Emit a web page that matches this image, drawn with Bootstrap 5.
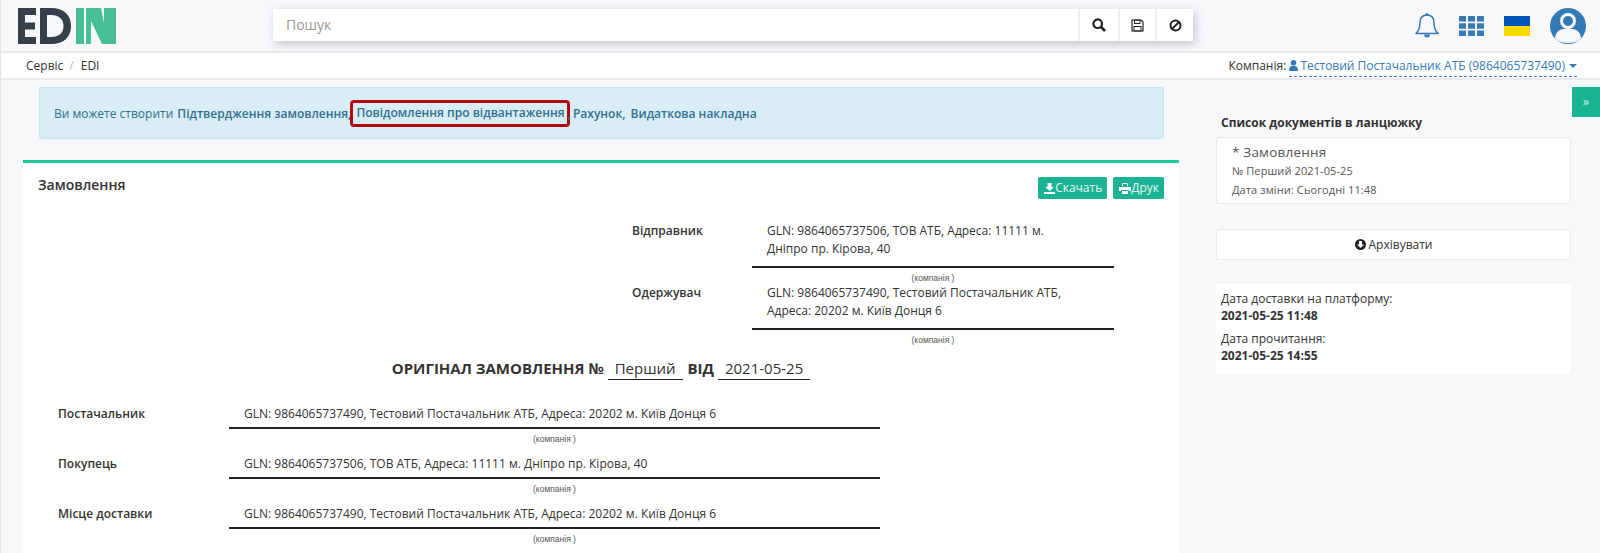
<!DOCTYPE html>
<html lang="uk">
<head>
  <meta charset="UTF-8" />
  <meta name="viewport" content="width=device-width, initial-scale=1" />
  <title>EDIN</title>
  <link href="https://cdn.jsdelivr.net/npm/bootstrap@5.3.0/dist/css/bootstrap.min.css" rel="stylesheet" />
  <style>
    html, body { height: 553px; overflow: hidden; }
    body {
      font-family: "Open Sans", "Noto Sans", sans-serif;
      font-size: 12px;
      line-height: 18px;
      color: #333;
      background: #f8f8fb;
      border-left: 1px solid #e2e2e2;
    }
    .top-bar { height: 53px; border-bottom: 2px solid #eaeaee; }
    .edin-logo { margin-left: 17px; margin-top: -1px; width: 100px; height: 37px; }
    .search-box {
      position: absolute; left: 272px; top: 9px;
      width: 920px; height: 32px;
      background: #fff;
      box-shadow: 2px 3px 10px rgba(90, 90, 120, .35);
    }
    .search-box .search-text { padding-left: 13px; font-size: 14px; color: #999; line-height: 32px; }
    .search-btn { height: 32px; border-left: 2px solid #eee; display: flex; align-items: center; justify-content: center; }
    .top-icons { margin-left: auto; padding-right: 14px; gap: 20px; }
    .crumb-bar { height: 27px; background: #fff; border-bottom: 2px solid #eaeaee; padding-left: 25px; padding-right: 23px; line-height: 25px; }
    .crumb-bar .sep { color: #bbb; margin: 0 7px 0 6px; }
    .company-link { color: #337ab7; border-bottom: 1px dashed #337ab7; line-height: 18px; margin-left: 3px; margin-top: 4px; height: 20px; }
    .company-link svg { margin-right: -1px; vertical-align: -1px; }
    .caret-down { display: inline-block; border: 4px solid transparent; border-top-color: #337ab7; border-bottom: 0; margin-left: 4px; vertical-align: 2px; }
    .main-area { position: relative; padding-left: 22px; }
    .left-col { width: 1156px; }
    .info-alert {
      margin: 7px 15px 21px 16px; height: 52px;
      background: #d9edf7; border: 1px solid #bce8f1; border-radius: 3px; color: #31708f;
      padding: 2px 0 0 14px; display: flex; align-items: center;
    }
    .info-alert b { font-weight: 600; }
    .info-alert .lead-text { margin-right: 4px; }
    .red-box { outline: 3px solid #b30a10; border-radius: 1px; padding: 1px 2px 2px 3px; margin: -1px 1px 0 2px; }
    .doc-panel { background: #fff; border-top: 3px solid #1cc7a0; height: 400px; padding: 14px 15px 0 15px; }
    .doc-title { font-size: 14px; font-weight: 600; margin-top: -1px; }
    .btn-pair { gap: 6px; }
    .teal-btn {
      background: #1ab394; color: #e9f8f5; border: 0; border-radius: 2px; height: 22px; font-size: 12px;
      padding: 0 5px 0 6px; line-height: 22px; display: inline-flex; align-items: center;
    }
    .party-block { margin-left: 594px; margin-top: 23px; }
    .party-row { display: flex; }
    .party-label { width: 120px; font-weight: 600; }
    .party-val { width: 362px; }
    .party-val .val-text { padding: 0 40px 8px 15px; border-bottom: 2px solid #222; line-height: 18px; }
    .caption-small { font-family: "Liberation Sans", sans-serif; font-size: 8.500px; line-height: 10px; text-align: center; color: #555; margin-top: 5px; height: 11px; }
    .doc-heading { text-align: center; font-size: 15px; font-weight: 700; margin-top: 11px; padding-left: 2px; line-height: 22px; }
    .fill-in { display: inline-block; font-weight: 400; border-bottom: 1px solid #222; padding: 0 7px; margin: 0 2px 0 0; font-size: 15px; }
    .fill-in.first-fill { margin-right: 1px; }
    .bottom-rows { margin-top: 25px; margin-left: 20px; }
    .bottom-row { display: flex; height: 50px; }
    .bottom-row .party-label { width: 171px; }
    .bottom-row .party-val { width: 651px; }
    .bottom-row .val-text { padding: 0 0 4px 15px; }
    .right-col { width: 355px; margin-left: 37px; padding-top: 34px; }
    .chain-title { font-size: 12px; font-weight: 700; padding-left: 5px; line-height: 18px; margin-bottom: 5px; }
    .chain-card { background: #fff; border: 1px solid #eaeaee; border-radius: 3px; height: 67px; padding: 5px 15px; font-size: 11px; font-weight: 500; line-height: 19px; letter-spacing: .1px; color: #555; }
    .chain-card .chain-name { font-size: 13.500px; letter-spacing: .2px; line-height: 18px; font-weight: 500; }
    .archive-btn { background: #fff; border: 1px solid #eaeaee; border-radius: 2px; height: 31px; margin-top: 25px; display: flex; align-items: center; justify-content: center; gap: 3px; }
    .dates-box { background: #fff; height: 90px; margin-top: 24px; padding: 6px 5px; line-height: 17px; }
    .dates-box b { display: block; margin-bottom: 6px; }
    .toggle-btn { position: absolute; right: 0; top: 7px; width: 28px; height: 30px; background: #1ab394; color: #d5f3ec; font-size: 13px; line-height: 28px; text-align: center; }
  </style>
</head>
<body>

<header class="top-bar d-flex align-items-center position-relative">
  <svg class="edin-logo" viewBox="0 0 100 37" aria-label="EDIN">
    <rect x="0" y="1" width="7" height="36" fill="#363f4a"/>
    <rect x="0" y="1" width="18" height="7" fill="#363f4a"/>
    <rect x="0" y="15.500" width="17" height="7" fill="#363f4a"/>
    <rect x="0" y="30" width="18" height="7" fill="#363f4a"/>
    <path fill="#363f4a" fill-rule="evenodd" d="M22 1h11c13 0 20 7 20 18s-7 18-20 18H22zM29 8v22h4c8 0 12.500-4 12.500-11S41 8 33 8z"/>
    <rect x="58" y="1" width="8" height="36" fill="#47c09a"/>
    <path fill="#47c09a" d="M68 1h30v36H68z"/>
    <path fill="#f8f8fb" d="M73 14v23h11z"/>
    <path fill="#f8f8fb" d="M83 1h3v15z"/>
  </svg>

  <div class="search-box d-flex">
    <div class="search-text flex-grow-1">Пошук</div>
    <div class="search-btn" style="width:40px">
      <svg width="14" height="14" viewBox="0 0 14 14"><circle cx="5.700" cy="5.700" r="4.300" fill="none" stroke="#222" stroke-width="2.200"/><path d="M9 9l4 4" stroke="#222" stroke-width="2.600"/></svg>
    </div>
    <div class="search-btn" style="width:37px">
      <svg width="13" height="13" viewBox="0 0 13 13"><path d="M1 1h9l2 2v9H1z" fill="none" stroke="#222" stroke-width="1.200"/><rect x="3.500" y="1" width="5.500" height="3.500" fill="none" stroke="#222"/><rect x="3" y="7.500" width="7" height="4.500" fill="none" stroke="#222"/></svg>
    </div>
    <div class="search-btn" style="width:38px">
      <svg width="13" height="13" viewBox="0 0 13 13"><circle cx="6.500" cy="6.500" r="5" fill="none" stroke="#222" stroke-width="2"/><path d="M3 10l7-7" stroke="#222" stroke-width="2"/></svg>
    </div>
  </div>

  <div class="top-icons d-flex align-items-center">
    <svg width="24" height="27" viewBox="0 0 24 27"><path d="M12 3c-5 0-7 3.500-7 8 0 5-1.500 8-4 10.500h22C20.500 19 19 16 19 11c0-4.500-2-8-7-8z" fill="none" stroke="#337ab7" stroke-width="1.500" stroke-linejoin="round"/><circle cx="12" cy="2.500" r="1.500" fill="#337ab7"/><path d="M9 22.500a3 3 0 0 0 6 0z" fill="#337ab7"/></svg>
    <svg width="25" height="20" viewBox="0 0 25 20"><g fill="#337ab7"><rect width="7" height="5.500" rx=".5"/><rect x="9" width="7" height="5.500" rx=".5"/><rect x="18" width="7" height="5.500" rx=".5"/><rect y="7.300" width="7" height="5.500" rx=".5"/><rect x="9" y="7.300" width="7" height="5.500" rx=".5"/><rect x="18" y="7.300" width="7" height="5.500" rx=".5"/><rect y="14.500" width="7" height="5.500" rx=".5"/><rect x="9" y="14.500" width="7" height="5.500" rx=".5"/><rect x="18" y="14.500" width="7" height="5.500" rx=".5"/></g></svg>
    <svg width="26" height="20" viewBox="0 0 26 20"><rect width="26" height="10" fill="#0057b8"/><rect y="10" width="26" height="10" fill="#ffd700"/></svg>
    <svg width="36" height="36" viewBox="0 0 36 36"><defs><clipPath id="avatarClip"><circle cx="18" cy="18" r="18"/></clipPath></defs><circle cx="18" cy="18" r="18" fill="#337ab7"/><circle cx="18" cy="13" r="6.500" fill="none" stroke="#f8f8fb" stroke-width="3"/><path clip-path="url(#avatarClip)" d="M5 31c0-6 4-10 9-10h8c5 0 9 4 9 10-3 2.500-8 4-13 4s-10-1.500-13-4z" fill="#f8f8fb"/></svg>
  </div>
</header>

<div class="crumb-bar d-flex justify-content-between">
  <div>Сервіс<span class="sep">/</span>EDI</div>
  <div class="d-flex">
    <span>Компанія:</span>
    <span class="company-link">
      <svg width="9" height="11" viewBox="0 0 9 11"><circle cx="4.500" cy="2.800" r="2.800" fill="#337ab7"/><path d="M0 11c0-3 1-5 3-5h3c2 0 3 2 3 5z" fill="#337ab7"/></svg>
      Тестовий Постачальник АТБ (9864065737490)<span class="caret-down"></span>
    </span>
  </div>
</div>

<div class="main-area d-flex">
  <div class="left-col">
    <div class="info-alert">
      <span class="lead-text">Ви можете створити</span>
      <b>Підтвердження замовлення,</b>
      <b class="red-box">Повідомлення про відвантаження</b>
      <b>,&thinsp;Рахунок,&thinsp; Видаткова накладна</b>
    </div>

    <div class="doc-panel">
      <div class="d-flex justify-content-between">
        <div class="doc-title">Замовлення</div>
        <div class="btn-pair d-flex">
          <button class="teal-btn" type="button">
            <svg width="11" height="11" viewBox="0 0 11 11"><path d="M3.500 0h4v4h2.500L5.500 8 1 4h2.500zM0 9h11v2H0z" fill="#fff"/></svg>Скачать
          </button>
          <button class="teal-btn" type="button">
            <svg width="12" height="11" viewBox="0 0 12 11"><path d="M3 3V1.500A1.500 1.500 0 0 1 4.500 0h3A1.500 1.500 0 0 1 9 1.500V3H8V1H4v2zM0 4h12v4h-2V7H2v1H0zM3 8h6v3H3z" fill="#fff"/></svg>Друк
          </button>
        </div>
      </div>

      <div class="party-block">
        <div class="party-row">
          <div class="party-label">Відправник</div>
          <div class="party-val">
            <div class="val-text">GLN: 9864065737506, ТОВ АТБ, Адреса: 11111 м. Дніпро пр. Кірова, 40</div>
            <div class="caption-small">(компанія )</div>
          </div>
        </div>
        <div class="party-row">
          <div class="party-label">Одержувач</div>
          <div class="party-val">
            <div class="val-text">GLN: 9864065737490, Тестовий Постачальник АТБ, Адреса: 20202 м. Київ Донця 6</div>
            <div class="caption-small">(компанія )</div>
          </div>
        </div>
      </div>

      <div class="doc-heading">
        ОРИГІНАЛ ЗАМОВЛЕННЯ № <span class="fill-in first-fill">Перший</span> ВІД <span class="fill-in">2021-05-25</span>
      </div>

      <div class="bottom-rows">
        <div class="bottom-row">
          <div class="party-label">Постачальник</div>
          <div class="party-val">
            <div class="val-text">GLN: 9864065737490, Тестовий Постачальник АТБ, Адреса: 20202 м. Київ Донця 6</div>
            <div class="caption-small">(компанія )</div>
          </div>
        </div>
        <div class="bottom-row">
          <div class="party-label">Покупець</div>
          <div class="party-val">
            <div class="val-text">GLN: 9864065737506, ТОВ АТБ, Адреса: 11111 м. Дніпро пр. Кірова, 40</div>
            <div class="caption-small">(компанія )</div>
          </div>
        </div>
        <div class="bottom-row">
          <div class="party-label">Місце доставки</div>
          <div class="party-val">
            <div class="val-text">GLN: 9864065737490, Тестовий Постачальник АТБ, Адреса: 20202 м. Київ Донця 6</div>
            <div class="caption-small">(компанія )</div>
          </div>
        </div>
      </div>
    </div>
  </div>

  <aside class="right-col">
    <div class="chain-title">Список документів в ланцюжку</div>
    <div class="chain-card">
      <div class="chain-name">* Замовлення</div>
      <div>№ Перший 2021-05-25</div>
      <div>Дата зміни: Сьогодні 11:48</div>
    </div>
    <div class="archive-btn">
      <svg width="11" height="11" viewBox="0 0 11 11"><circle cx="5.500" cy="5.500" r="5.500" fill="#222"/><path d="M4 2h3v3.500h2L5.500 9 2 5.500h2z" fill="#fff"/></svg>
      Архівувати
    </div>
    <div class="dates-box">
      Дата доставки на платформу:
      <b>2021-05-25 11:48</b>
      Дата прочитання:
      <b>2021-05-25 14:55</b>
    </div>
  </aside>

  <div class="toggle-btn">»</div>
</div>

</body>
</html>
